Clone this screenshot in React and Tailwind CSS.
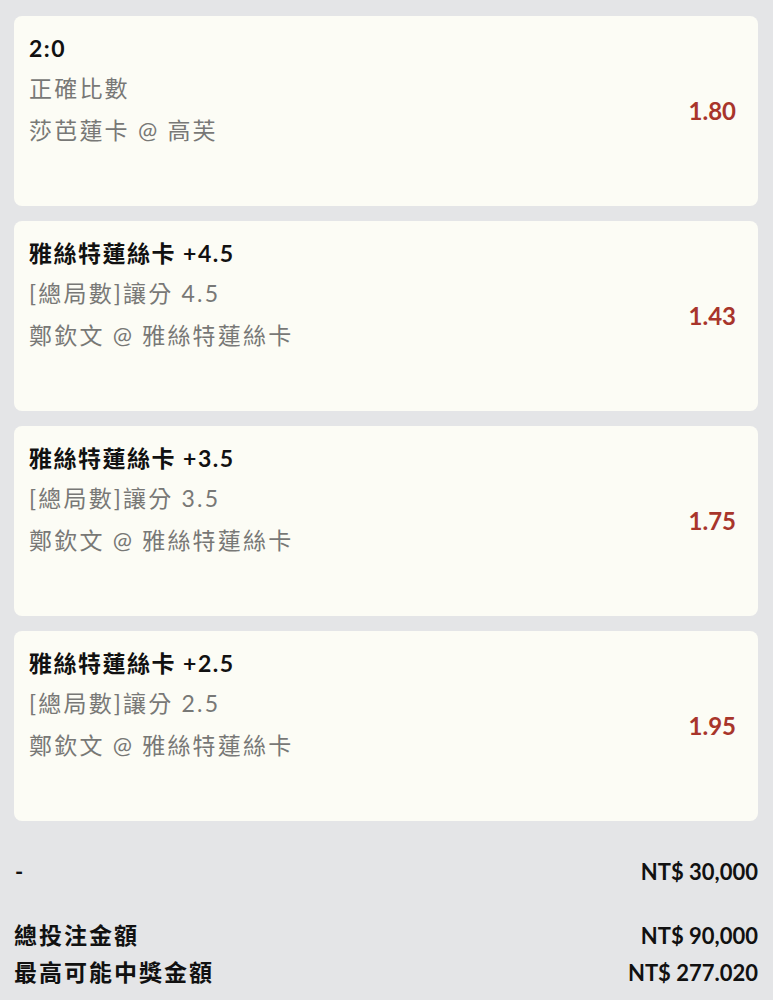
import React from 'react';

const FONT = { fontFamily: 'Lato, "Noto Sans CJK TC", sans-serif' };

const BETS = [
  { title: '2:0', market: '正確比數', pick: '莎芭蓮卡 @ 高芙', odds: '1.80' },
  { title: '雅絲特蓮絲卡 +4.5', market: '[總局數]讓分 4.5', pick: '鄭欽文 @ 雅絲特蓮絲卡', odds: '1.43' },
  { title: '雅絲特蓮絲卡 +3.5', market: '[總局數]讓分 3.5', pick: '鄭欽文 @ 雅絲特蓮絲卡', odds: '1.75' },
  { title: '雅絲特蓮絲卡 +2.5', market: '[總局數]讓分 2.5', pick: '鄭欽文 @ 雅絲特蓮絲卡', odds: '1.95' },
];

function BetCard({ bet }) {
  return (
    <div className="flex h-[190px] items-center justify-between rounded-lg bg-[#fcfcf5] pl-[15px] pr-[22px]">
      <div className="self-start pt-[12px] text-[23px] leading-[41px]">
        <div className="font-bold tracking-[1.5px] text-[#111111]">{bet.title}</div>
        <div className="-mt-[1px] tracking-[2.2px] text-[#787876]">{bet.market}</div>
        <div className="mt-[1px] tracking-[2.2px] text-[#787876]">{bet.pick}</div>
      </div>
      <div className="text-[24px] font-bold text-[#a8352b]">{bet.odds}</div>
    </div>
  );
}

export default function App() {
  return (
    <div className="min-h-[1000px] bg-[#e4e5e7] pl-[14px] pr-[15px] pt-[16px]" style={FONT}>
      <div className="flex flex-col gap-[15px]">
        {BETS.map((b, i) => <BetCard key={i} bet={b} />)}
      </div>

      <div className="mt-[31px] flex items-center justify-between text-[22px] font-bold leading-[40px] text-[#111111]">
        <span className="pl-px">-</span>
        <span>NT$ 30,000</span>
      </div>

      <div className="mt-[25px] text-[22px] font-bold leading-[37px] text-[#111111]">
        <div className="flex items-center justify-between">
          <span className="text-[23px] tracking-[2px]">總投注金額</span>
          <span>NT$ 90,000</span>
        </div>
        <div className="flex items-center justify-between">
          <span className="text-[23px] tracking-[2px]">最高可能中獎金額</span>
          <span>NT$ 277.020</span>
        </div>
      </div>
    </div>
  );
}
